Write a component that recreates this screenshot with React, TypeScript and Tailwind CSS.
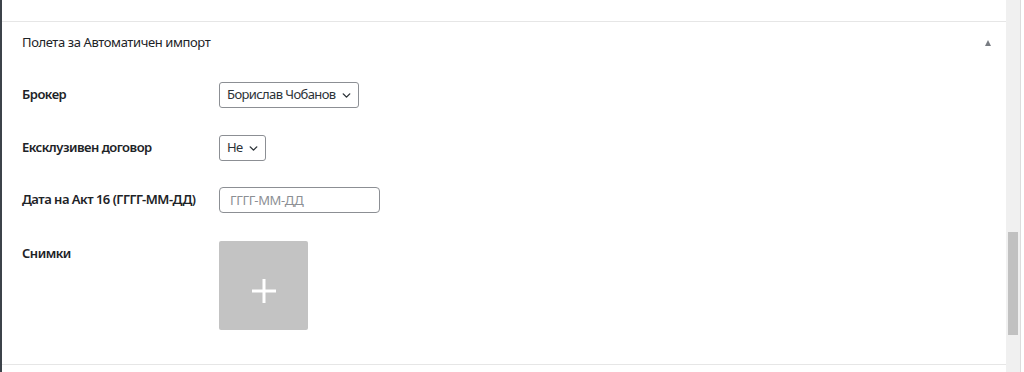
import { ChevronDown } from 'lucide-react'

const font = { fontFamily: '"Noto Sans", "Open Sans", sans-serif' }

export default function App() {
  return (
    <div className="flex h-[372px] w-[1024px] overflow-hidden bg-white text-[#1d2327]" style={font}>
      <div className="w-[2px] shrink-0 bg-[#3c434a]" />
      <div className="flex w-[1004px] shrink-0 flex-col">
        <div className="h-[22px] border-b border-[#e6e6e6]" />
        <MetaBox />
      </div>
      <Scrollbar />
    </div>
  )
}

function MetaBox() {
  return (
    <section className="flex h-[343px] flex-col border-b border-[#e6e6e6]">
      <div className="flex h-[41px] items-center justify-between pl-[20px] pr-[15px] text-[13px] tracking-[-0.4px]">
        <h2 className="font-normal">Полета за Автоматичен импорт</h2>
        <span className="h-0 w-0 border-x-[3.5px] border-b-[6px] border-x-transparent border-b-[#787c82]" />
      </div>
      <div className="flex flex-col pt-[19px] pl-[20px]">
        <Row label="Брокер">
          <Select value="Борислав Чобанов" />
        </Row>
        <div className="h-[27px]" />
        <Row label="Ексклузивен договор">
          <Select value="Не" />
        </Row>
        <div className="h-[26px]" />
        <Row label="Дата на Акт 16 (ГГГГ-ММ-ДД)">
          <input
            placeholder="ГГГГ-ММ-ДД"
            className="h-[26px] w-[161px] rounded-[4px] border border-[#8c8f94] px-[10px] text-[13px] tracking-[-0.4px] placeholder:text-[#8c8f94] outline-none"
            style={font}
          />
        </Row>
        <div className="h-[28px]" />
        <div className="flex">
          <label className="w-[197px] shrink-0 pt-[3px] text-[13px] font-semibold tracking-[-0.5px]">Снимки</label>
          <div className="flex h-[89px] w-[89px] items-center justify-center rounded-[2px] bg-[#c3c3c3] pt-[11px]">
            <svg width="24" height="24" viewBox="0 0 24 24" fill="#ffffff">
              <rect x="10.5" y="0" width="3" height="24" />
              <rect x="0" y="10.5" width="24" height="3" />
            </svg>
          </div>
        </div>
      </div>
    </section>
  )
}

function Row({ label, children }: { label: string; children: React.ReactNode }) {
  return (
    <div className="flex h-[26px] items-center">
      <label className="w-[197px] shrink-0 text-[13px] font-semibold tracking-[-0.5px]">{label}</label>
      {children}
    </div>
  )
}

function Select({ value }: { value: string }) {
  return (
    <div className="flex h-[26px] items-center gap-[4px] whitespace-nowrap rounded-[3px] border border-[#8c8f94] pl-[7px] pr-[5px] text-[13px] tracking-[-0.6px] text-[#2c3338]">
      <span>{value}</span>
      <ChevronDown size={13} strokeWidth={2.6} color="#2c3338" />
    </div>
  )
}

function Scrollbar() {
  return (
    <div className="flex shrink-0">
      <div className="flex w-[14px] flex-col bg-[#f0f0f0] px-[2px]">
        <div className="h-[232px]" />
        <div className="h-[103px] bg-[#c1c1c1]" />
      </div>
      <div className="w-px bg-[#dcdcdc]" />
      <div className="w-[3px] bg-white" />
    </div>
  )
}
